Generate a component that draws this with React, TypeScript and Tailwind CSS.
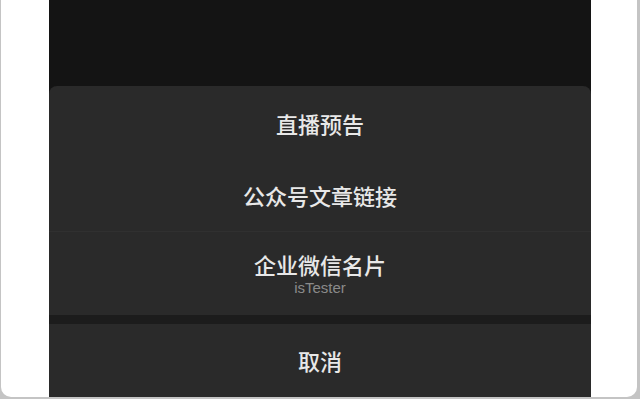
import React from 'react'

const font = { fontFamily: '"Noto Sans CJK SC", "Noto Sans", sans-serif' }

export default function App() {
  return (
    <div className="h-[399px] w-[640px] overflow-hidden bg-[#c4c4c4]" style={font}>
      <div className="ml-px flex h-[397px] w-[636px] rounded-b-[10px] bg-white">
        <div className="ml-[48px] flex h-full w-[542px] flex-col bg-[#141414]">
          <div className="h-[86px] shrink-0" />
          <div className="flex flex-1 flex-col overflow-hidden rounded-t-[8px] bg-[#2a2a2a] text-[#e8e8e8]">
            <div className="flex h-[74px] items-center justify-center text-[22px] font-medium">直播预告</div>
            <div className="flex h-[72px] items-center justify-center border-b border-[#303030] text-[22px] font-medium">
              公众号文章链接
            </div>
            <div className="flex h-[83px] flex-col items-center justify-center pt-px">
              <span className="text-[22px] font-medium leading-[28px]">企业微信名片</span>
              <span className="text-[15px] leading-[20px] text-[#8a8a8a]" style={{ fontFamily: '"Liberation Sans", sans-serif' }}>
                isTester
              </span>
            </div>
            <div className="h-[9px] bg-[#1c1c1c]" />
            <div className="flex flex-1 items-center justify-center text-[22px] font-medium">取消</div>
          </div>
        </div>
      </div>
    </div>
  )
}
